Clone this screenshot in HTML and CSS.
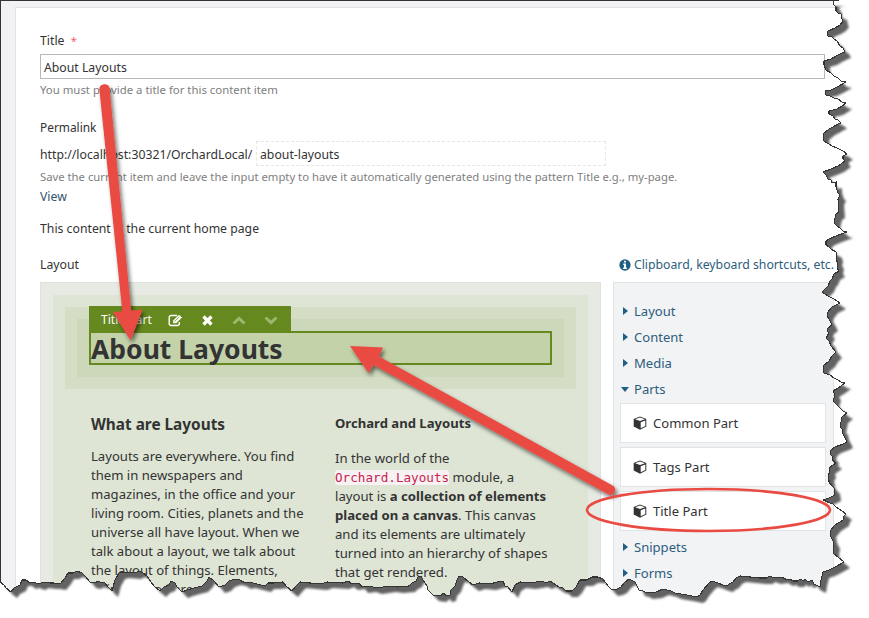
FILE: index.html
```
<!DOCTYPE html>
<html lang="en">
<head>
<meta charset="utf-8">
<title>Edit page</title>
<link rel="stylesheet" href="styles.css">
</head>
<body>
<svg class="defs" width="0" height="0">
  <symbol id="cube" viewBox="0 0 14 14">
    <path d="M7 .4 13.3 2.9V10.6L7 13.8.7 10.6V2.9Z" fill="#333"/>
    <path d="M7 1.4 11.9 3.3 7 5.1 2.1 3.3Z" fill="#fff"/>
    <path d="M7.7 6.2 12.3 4.4V10L7.7 12.3Z" fill="#fff"/>
  </symbol>
</svg>
<div class="page">
  <main class="card">
    <label class="label">Title <span class="req">*</span></label>
    <div class="input">About Layouts</div>
    <p class="hint">You must provide a title for this content item</p>

    <label class="label permalink">Permalink</label>
    <div class="url"><span>http://localhost:30321/OrchardLocal/</span><div class="slug">about-layouts</div></div>
    <p class="hint pattern">Save the current item and leave the input empty to have it automatically generated using the pattern Title e.g., my-page.</p>
    <a class="view">View</a>
    <p class="home">This content is the current home page</p>

    <div class="editor">
      <section class="left">
        <div class="label">Layout</div>
        <div class="canvas">
          <div class="grid">
            <div class="row"><div class="column">
              <div class="part">
                <div class="toolbar">
                  <span class="name">Title Part</span>
                  <svg class="edit" width="15" height="13" viewBox="0 0 15 13" fill="none" stroke="#fff"><path d="M9 1.5H3.2A2 2 0 0 0 1.2 3.5V9.5A2 2 0 0 0 3.2 11.5H9.3A2 2 0 0 0 11.3 9.5V8" stroke-width="1.4"/><path d="M5.2 6.5 11 .7 14 3.6 8.2 9.2H5.2Z" fill="#fff" stroke="none"/><path d="M6.6 7.5 11.4 2.8" stroke="#66891f" stroke-width=".8"/></svg>
                  <svg class="close" width="11" height="11" viewBox="0 0 11 11" stroke="#fff" stroke-width="3.3"><path d="M1.5 1.5 9.5 9.5M9.5 1.5 1.5 9.5"/></svg>
                  <svg class="up" width="14" height="9" viewBox="0 0 14 9" fill="none" stroke="#a0b56d" stroke-width="3"><path d="M1.500 7.500 7 2.300 12.500 7.500"/></svg>
                  <svg class="down" width="14" height="9" viewBox="0 0 14 9" fill="none" stroke="#a0b56d" stroke-width="3"><path d="M1.500 1.500 7 6.700 12.500 1.500"/></svg>
                </div>
                <h1>About Layouts</h1>
              </div>
            </div></div>
            <div class="texts">
              <article class="first">
                <h2>What are Layouts</h2>
                <p>Layouts are everywhere. You find<br>them in newspapers and<br>magazines, in the office and your<br>living room. Cities, planets and the<br>universe all have layout. When we<br>talk about a layout, we talk about<br>the layout of things. Elements,<br>being placed are</p>
              </article>
              <article class="second">
                <h3>Orchard and Layouts</h3>
                <p>In the world of the<br><code>Orchard.Layouts</code> module, a<br>layout is <b>a collection of elements<br>placed on a canvas</b>. This canvas<br>and its elements are ultimately<br>turned into an hierarchy of shapes<br>that get rendered.</p>
              </article>
            </div>
          </div>
        </div>
      </section>
      <aside class="right">
        <a class="help"><svg width="12" height="12" viewBox="0 0 12 12"><circle cx="6" cy="6" r="5.7" fill="#205e84"/><path d="M5 1.7H7V3.4H5ZM4.3 4.5H7V8.6H7.9V10H4.2V8.6H5V5.9H4.3Z" fill="#fff"/></svg>Clipboard, keyboard shortcuts, etc.</a>
        <div class="toolbox">
          <div class="cat">Layout</div>
          <div class="cat">Content</div>
          <div class="cat">Media</div>
          <div class="cat open">Parts</div>
          <div class="items">
            <div class="item"><svg width="14" height="14"><use href="#cube"/></svg>Common Part</div>
            <div class="item"><svg width="14" height="14"><use href="#cube"/></svg>Tags Part</div>
            <div class="item"><svg width="14" height="14"><use href="#cube"/></svg>Title Part</div>
          </div>
          <div class="cat">Snippets</div>
          <div class="cat">Forms</div>
        </div>
      </aside>
    </div>
  </main>
</div>
<svg class="overlay" width="869" height="618" viewBox="0 0 869 618">
  <defs>
    <path id="torn" d="M0 0H839L833 1 834 5 836 7 836 11 838 13 841 14 842 19 843 21 840 25 835 28 828 31 827 34 828 36 832 37 834 39 837 41 840 46 843 48 845 52 842 53 836 56 831 59 824 61 824 65 826 70 831 73 834 76 838 78 841 81 846 82 839 86 831 90 825 91 826 95 830 96 834 98 838 99 842 102 846 103 842 106 837 109 829 111 829 114 833 116 835 119 838 120 841 123 838 124 833 127 829 129 823 134 824 141 832 146 837 148 843 151 847 154 843 156 843 159 845 161 838 166 831 169 823 172 826 175 828 179 831 180 832 183 836 182 836 187 838 193 840 195 838 199 839 212 836 214 835 218 834 223 837 226 840 228 843 231 847 232 836 236 829 239 826 241 826 245 829 247 831 249 836 252 837 256 836 260 838 263 837 268 839 271 834 274 832 279 830 281 828 286 824 290 822 292 828 296 834 299 840 303 832 307 828 312 827 316 829 319 832 325 828 328 827 331 829 333 826 338 829 341 831 346 836 352 832 356 829 361 823 366 824 373 830 375 834 378 838 380 841 382 845 383 838 388 833 391 835 395 833 401 837 405 839 407 843 411 847 413 842 417 841 422 840 427 842 429 843 434 847 442 843 444 835 447 831 450 830 454 833 457 832 460 836 463 833 465 829 468 830 472 828 475 829 480 829 482 832 486 834 488 835 495 829 498 823 500 830 503 833 504 836 507 842 511 846 514 844 516 843 520 835 525 830 531 831 537 834 543 833 549 834 554 838 557 844 562 835 567 829 570 823 572 821 580 820 587 814 584 812 580 808 582 805 579 804 581 800 579 798 581 793 581 790 579 787 580 782 577 775 578 769 576 767 578 760 578 750 577 740 576 736 578 733 582 729 584 727 586 723 585 718 583 712 581 709 583 703 590 700 595 697 597 687 595 675 593 671 591 663 589 656 592 647 593 643 591 639 590 637 586 635 582 629 579 625 582 621 587 617 589 612 590 608 586 603 579 598 577 592 577 587 580 580 580 576 587 572 591 566 591 563 588 559 587 553 583 550 581 546 583 542 581 530 583 520 582 515 585 512 592 508 587 505 586 503 581 497 582 490 584 479 583 473 585 469 582 463 577 459 576 457 580 455 586 451 590 450 595 446 596 444 593 440 596 433 595 428 590 427 586 423 580 421 576 418 577 416 581 412 583 409 586 397 587 390 586 376 588 370 586 362 587 359 583 352 584 348 581 343 583 327 582 321 584 310 583 300 582 296 586 292 591 287 587 283 582 274 583 268 583 265 586 257 584 249 582 245 583 240 580 235 579 229 581 225 585 219 587 214 581 209 577 207 581 202 586 194 588 187 590 182 592 177 587 175 583 171 581 169 585 164 587 160 591 154 586 151 582 147 576 143 573 139 571 135 573 123 572 119 573 115 580 112 591 108 587 105 583 100 582 98 581 95 583 90 582 86 577 82 573 77 571 73 573 68 573 65 578 60 584 54 583 50 583 43 582 39 584 33 582 30 583 26 580 22 580 20 585 14 588 11 592 6 588 4 585 0 582Z"/>
    <mask id="outside"><rect width="869" height="618" fill="#fff"/><use href="#torn" fill="#000"/></mask>
    <filter id="soft" x="-5%" y="-5%" width="110%" height="110%"><feGaussianBlur stdDeviation="1.3"/></filter>
    <filter id="drop" x="-30%" y="-30%" width="170%" height="170%"><feDropShadow dx="2" dy="3" stdDeviation="2" flood-opacity=".55"/></filter>
  </defs>
  <g mask="url(#outside)">
    <rect width="869" height="618" fill="#fff"/>
    <use href="#torn" x="6" y="6" fill="#626262" filter="url(#soft)"/>
    <path d="M0 580V618H8V594Z" fill="#fff"/>
  </g>
  <use href="#torn" fill="none" stroke="#343434" stroke-width="1.1" class="edge"/>
  <path d="M0 .5H839M.5 0V583" stroke="#343434"/>
  <g fill="#e94b43" filter="url(#drop)">
    <path d="M99.300 89A5.200 5.200 0 0 1 109.600 88.500L131.200 310.800 142.500 309.500 130.500 340.500 113 312 122.300 311.300Z"/>
    <path d="M350 346 383 347.500 379 356.500 613.500 486A5.100 5.100 0 0 1 608.500 494.600L373.500 365 368.500 373Z"/>
  </g>
  <ellipse cx="708.500" cy="510" rx="121.500" ry="21" fill="none" stroke="#e94b43" stroke-width="2.600"/>
</svg>
</body>
</html>
```
FILE: styles.css
```
* { box-sizing: border-box; }
body { margin: 0; background: #fff; color: #333; font: 12.25px/20px "Noto Sans", "Open Sans", sans-serif; }
h1, h2, h3, p { margin: 0; }
.defs { display: block; }
.page { position: relative; height: 618px; overflow: hidden; background: #f2f2f5; padding: 7px 0 0 15px; }
.card { width: 900px; height: 640px; background: #fff; border: 1px solid #e2e2e5; padding: 23px 0 0 24px; }
.label { display: block; height: 20px; }
.req { color: #ee5f6b; margin-left: 3px; font-size: 11px; }
.input { width: 785px; height: 25px; margin-top: 3px; border: 1px solid #b8b8b8; padding: 0 3px; line-height: 25px; }
.hint { height: 18px; margin-top: 2px; line-height: 18px; font-size: 11.38px; color: #808080; white-space: nowrap; }
.permalink { margin-top: 18px; font-size: 11.9px; }
.url { display: flex; margin-top: 4px; height: 25px; line-height: 27px; }
.url span { width: 216px; }
.slug { width: 350px; border: 1px dashed #e6e6dc; padding-left: 3px; line-height: 25px; }
.pattern { font-size: 11.29px; }
.view { display: block; margin-top: 1px; color: #33556b; }
.home { margin-top: 12px; height: 20px; }
.editor { display: flex; gap: 12px; margin-top: 16px; }
.left { width: 561px; }
.canvas { margin-top: 7px; height: 360px; background: #e7eae3; border: 1px solid #e0e1e2; padding: 12px; }
.grid { background: #dee5d5; height: 340px; padding: 12px; }
.row { background: #d5ddc5; padding: 12px; height: 82px; }
.column { background: #cdd8ba; padding: 12px; height: 58px; }
.part { position: relative; height: 34px; background: #c4d2aa; border: 2px solid #66891f; }
.toolbar { position: absolute; left: -2px; top: -27px; width: 202px; height: 27px; background: #66891f; color: #fff; display: flex; align-items: center; padding: 1px 0 0 12px; }
.name { width: 67px; font-size: 12.1px; white-space: nowrap; }
.close { margin-left: 19px; }
.up { margin-left: 19px; }
.down { margin-left: 18px; }
h1 { font-size: 26.5px; line-height: 32px; font-weight: 700; }
.texts { display: flex; font-size: 13.1px; line-height: 19px; white-space: nowrap; padding-left: 26px; }
.texts .first { width: 244px; }
h2 { font-size: 15.35px; line-height: 20px; margin: 25px 0 13px; }
h3 { font-size: 13.1px; line-height: 20px; margin: 24px 0 16px; }
.second { font-size: 13.15px; }
code { font: 12.65px/16px "DejaVu Sans Mono", monospace; color: #c7254e; background: #f9f2f4; border-radius: 3px; }
.right { width: 221px; }
.help { display: flex; align-items: center; gap: 3px; height: 20px; margin-left: 6px; color: #2d5d7c; white-space: nowrap; }
.toolbox { margin-top: 7px; height: 360px; background: #f2f3f5; border: 1px solid #e1e2e4; padding: 15px 7px 15px 6px; font-size: 13.05px; color: #2d5d7c; }
.cat { display: flex; align-items: center; height: 26px; padding-left: 3px; }
.cat::before { content: ""; flex: none; width: 0; border: 4.500px solid transparent; border-left: 5px solid #205e84; border-right: 0; margin-right: 6px; }
.cat.open::before { border: 4.500px solid transparent; border-top: 5px solid #205e84; border-bottom: 0; margin: 0 5px 0 -2px; }
.items { display: grid; gap: 4px; margin-bottom: 3px; margin-top: 1px; }
.item { display: flex; align-items: center; gap: 6px; height: 40px; padding-left: 12px; background: #fff; border: 1px solid #e2e3e5; color: #333; }
.overlay { position: absolute; left: 0; top: 0; }
.edge { shape-rendering: crispEdges; }
```
